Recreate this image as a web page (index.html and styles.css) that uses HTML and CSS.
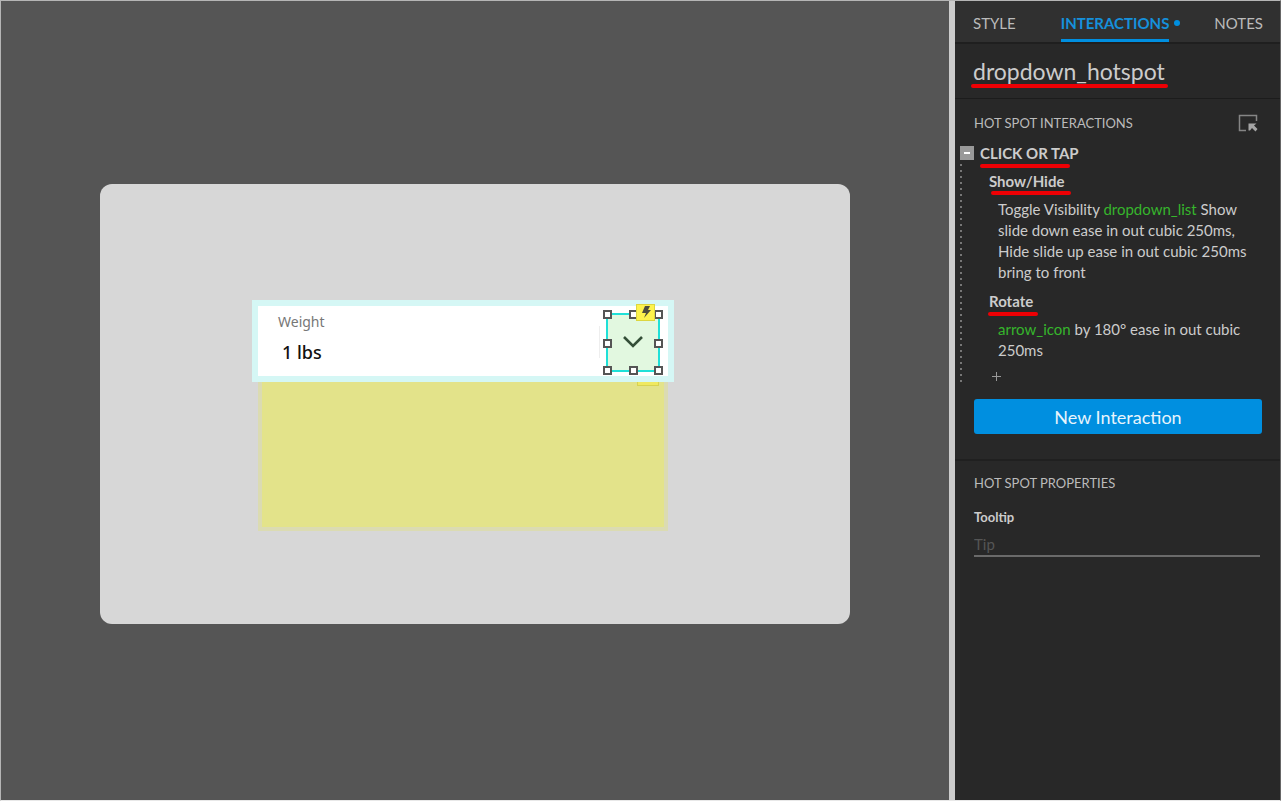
FILE: index.html
```html
<!DOCTYPE html>
<html lang="en">
<head>
    <meta charset="UTF-8">
    <meta name="viewport" content="width=device-width, initial-scale=1.0">
    <title>dropdown_hotspot</title>
    <link rel="stylesheet" href="styles.css">
</head>
<body>
    <div class="app">
        <main class="canvas">
            <div class="board">
                <div class="widget">
                    <div class="field">
                        <div class="value">
                            <span class="label">Weight</span>
                            <span class="number">1 lbs</span>
                        </div>
                        <div class="hotspot">
                            <svg class="arrow" width="22" height="16" viewBox="0 0 22 16">
                                <path d="M2 3l9 9 9-9" fill="none" stroke="#344f38" stroke-width="2.6"/>
                            </svg>
                            <i class="handle tl"></i>
                            <i class="handle tc"></i>
                            <i class="handle tr"></i>
                            <i class="handle ml"></i>
                            <i class="handle mr"></i>
                            <i class="handle bl"></i>
                            <i class="handle bc"></i>
                            <i class="handle br"></i>
                            <span class="bolt">
                                <svg width="10" height="12" viewBox="0 0 10 12">
                                    <path d="M4 0h5L7 4h3L3 12l2-5H1z" fill="#4d4d3c"/>
                                </svg>
                            </span>
                        </div>
                    </div>
                    <!-- hidden dropdown_list -->
                    <div class="list"></div>
                </div>
            </div>
        </main>
        <aside class="panel">
            <nav class="tabs">
                <a href="#">STYLE</a>
                <a href="#" class="current">INTERACTIONS</a>
                <a href="#">NOTES</a>
            </nav>
            <div class="name">
                <h1 class="mark mark-name">dropdown_hotspot</h1>
            </div>
            <section class="interactions">
                <div class="head">
                    <h2>HOT SPOT INTERACTIONS</h2>
                    <button class="pick" aria-label="Select target">
                        <svg width="20" height="18" viewBox="0 0 20 18">
                            <path d="M8 16.500H1.500V1.500H18.500V7" fill="none" stroke="#858585" stroke-width="1.500"/>
                            <path d="M10.500 9.500h8l-2.500 2 3.500 3.500-2 2.500-3.500-3.500-2 2.500h-1.500z" fill="#a5a5a5"/>
                        </svg>
                    </button>
                </div>
                <div class="event">
                    <div class="side">
                        <button class="fold" aria-label="Collapse"></button>
                        <div class="dots"></div>
                    </div>
                    <div class="tree">
                        <h3><span class="mark mark-event">CLICK OR TAP</span></h3>
                        <div class="action">
                            <h4><span class="mark mark-show">Show/Hide</span></h4>
                            <p>Toggle Visibility <b>dropdown_list</b> Show<br>slide down ease in out cubic 250ms,<br>Hide slide up ease in out cubic 250ms<br>bring to front</p>
                            <h4><span class="mark mark-rotate">Rotate</span></h4>
                            <p><b>arrow_icon</b> by 180° ease in out cubic<br>250ms</p>
                            <button class="add" aria-label="Add action"></button>
                        </div>
                    </div>
                </div>
                <button class="new">New Interaction</button>
            </section>
            <section class="properties">
                <h2>HOT SPOT PROPERTIES</h2>
                <label for="tip">Tooltip</label>
                <input type="text" id="tip" placeholder="Tip">
            </section>
        </aside>
    </div>
</body>
</html>
```
FILE: styles.css
```css
*{
    box-sizing: border-box;
    padding: 0;
    margin: 0;
}
body{
    font-family: Lato, "Open Sans", sans-serif;
    font-size: 15px;
    color: #ccc;
}
button{
    border: 0;
    background: none;
    font-family: inherit;
    cursor: pointer;
}
svg{
    display: block;
}
h2, h4, b{
    font-weight: normal;
}
.app{
    display: flex;
    min-height: 100vh;
    border: 1px solid #b5b5b5;
    border-bottom-color: #e8e8e8;
    border-right-color: #666;
}
/* canvas */
.canvas{
    flex: 1;
    display: flex;
    align-items: center;
    justify-content: center;
    padding-top: 6px;
    background-color: #555;
}
.board{
    display: flex;
    justify-content: center;
    width: 750px;
    height: 440px;
    padding: 116px 24px 0 0;
    border-radius: 12px;
    background-color: #d7d7d7;
}
.widget{
    width: 422px;
}
.field{
    display: flex;
    justify-content: space-between;
    height: 82px;
    border: 6px solid #d5f7f5;
    background-color: #fff;
}
.value{
    display: flex;
    flex-direction: column;
    padding: 4px 0 0 20px;
    width: 342px;
    font-family: "Noto Sans", sans-serif;
    background: linear-gradient(#eee, #eee) no-repeat right 20px / 1px 32px;
}
.label{
    font-size: 14px;
    line-height: 24px;
    color: #777;
}
.number{
    padding-left: 4px;
    font-size: 18px;
    font-weight: 500;
    line-height: 36px;
    color: #111;
}
.hotspot{
    position: relative;
    display: flex;
    align-items: center;
    justify-content: center;
    width: 54px;
    height: 59px;
    margin: 7px 8px 0 0;
    border: 2px solid #1fe0d8;
    background-color: #e2f8e0;
}
.handle{
    position: absolute;
    width: 9px;
    height: 9px;
    border: 2px solid #555;
    background-color: #fff;
}
.tl, .tc, .tr{
    top: -5px;
}
.ml, .mr{
    top: 24px;
}
.bl, .bc, .br{
    bottom: -5px;
}
.tl, .ml, .bl{
    left: -5px;
}
.tc, .bc{
    left: 21px;
}
.tr, .mr, .br{
    right: -5px;
}
.bolt{
    position: absolute;
    top: -11px;
    right: 3px;
    display: flex;
    align-items: center;
    justify-content: center;
    width: 19px;
    height: 17px;
    border: 1px solid #dcd640;
    background-color: #fdf34c;
}
.list{
    position: relative;
    height: 149px;
    margin: 0 6px;
    border: 4px solid #dbdbb2;
    border-top: 0;
    background-color: #e3e38a;
}
.list::after{
    content: "";
    position: absolute;
    top: 0;
    right: 5px;
    width: 20px;
    height: 3px;
    border: 1px solid #d8d350;
    border-top: 0;
    background-color: #f0e960;
}
/* panel */
.panel{
    width: 331px;
    border-left: 6px solid #ccc;
    background-color: #282828;
}
.tabs{
    display: flex;
    justify-content: space-between;
    height: 43px;
    padding: 0 17px 0 18px;
    border-bottom: 2px solid #1f1f1f;
    background-color: #303030;
}
.tabs a{
    line-height: 44px;
    color: #bbb;
    text-decoration: none;
}
.tabs .current{
    position: relative;
    height: 41px;
    border-bottom: 3px solid #008fe0;
    font-weight: bold;
    color: #1590dc;
}
.current::after{
    content: "";
    position: absolute;
    top: 19px;
    right: -11px;
    width: 6px;
    height: 6px;
    border-radius: 50%;
    background-color: #008fe0;
}
.name{
    height: 55px;
    padding-left: 18px;
    border-bottom: 1px solid #1c1c1c;
}
h1{
    font-size: 23px;
    font-weight: normal;
    line-height: 54px;
}
/* red marks under the names */
.mark{
    position: relative;
    display: inline-block;
}
.mark::after{
    content: "";
    position: absolute;
    left: 0;
    bottom: 0;
    width: 100%;
    height: 4px;
    border-radius: 2px;
    background-color: #ee0004;
}
.mark-name::after{
    left: -2px;
    bottom: 10px;
    width: 197px;
}
.mark-event::after{
    bottom: -1px;
    width: 90px;
}
.mark-show::after{
    left: 2px;
    width: 80px;
}
.mark-rotate::after{
    left: -1px;
    bottom: -1px;
    width: 50px;
}
.interactions{
    padding: 14px 18px 25px 5px;
    border-bottom: 2px solid #202020;
}
.head{
    display: flex;
    align-items: center;
    justify-content: space-between;
    padding: 0 4px 6px 14px;
}
h2{
    font-size: 13px;
    line-height: 20px;
    color: #bbb;
}
.event{
    display: flex;
}
.side{
    display: flex;
    flex-direction: column;
    width: 20px;
    padding-top: 7px;
}
.fold{
    width: 14px;
    height: 14px;
    background: linear-gradient(#fff, #fff) no-repeat center / 6px 2px #999;
}
.dots{
    flex: 1;
    width: 2px;
    margin: 4px 0 14px;
    background: repeating-linear-gradient(#777 0 2px, transparent 2px 6px);
}
h3{
    font-size: 15px;
    line-height: 28px;
}
h4{
    font-size: 15px;
    font-weight: bold;
    line-height: 28px;
}
h3, h4{
    height: 28px;
}
.action{
    padding-left: 9px;
}
.action p{
    padding: 4px 0 4px 9px;
    line-height: 21px;
    white-space: nowrap;
}
.action b{
    color: #36b52c;
}
.add{
    display: block;
    width: 14px;
    height: 22px;
    margin-bottom: 12px;
    background: linear-gradient(#999, #999) no-repeat center / 9px 1px,
        linear-gradient(#999, #999) no-repeat center / 1px 9px;
}
.new{
    display: block;
    width: calc(100% - 14px);
    height: 35px;
    margin-left: 14px;
    border-radius: 3px;
    background-color: #008fe0;
    font-size: 18px;
    line-height: 32px;
    color: #e8f4fc;
}
.properties{
    padding: 12px 20px 0 19px;
}
.properties label{
    display: block;
    padding: 14px 0 6px;
    font-size: 13px;
    font-weight: bold;
    line-height: 20px;
}
.properties input{
    display: block;
    width: 100%;
    height: 24px;
    border: 0;
    border-bottom: 2px solid #6a6a6a;
    background: none;
    font-family: inherit;
    font-size: 15px;
    color: #ccc;
}
.properties input::placeholder{
    color: #555;
}
```
